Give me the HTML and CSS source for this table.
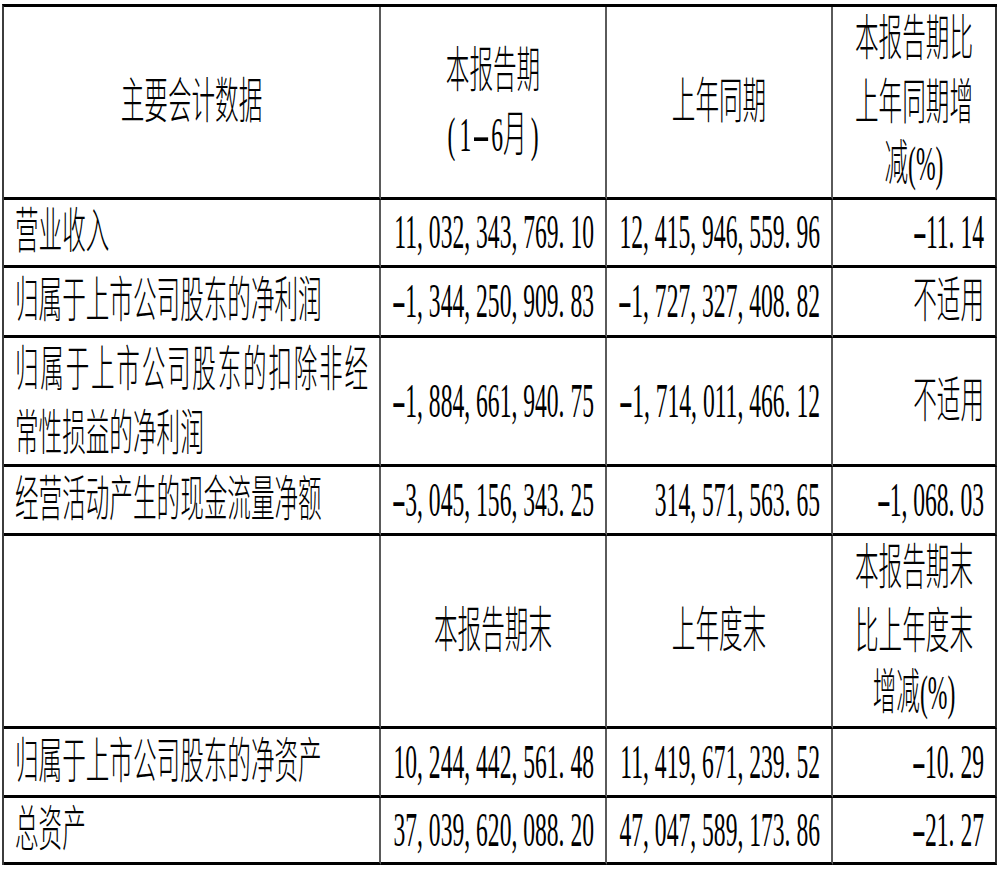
FILE: index.html
```html
<!DOCTYPE html>
<html lang="zh-CN">
<head>
<meta charset="utf-8">
<title>主要会计数据</title>
<link rel="stylesheet" href="styles.css">
</head>
<body>
<div class="sheet" role="table">
  <div class="row" role="row">
    <div class="cell center" role="columnheader"><span class="t">主要会计数据</span></div>
    <div class="cell center" role="columnheader"><span class="t">本报告期<br><span class="po">(</span>1<span class="dash">-</span>6月<span class="pc">)</span></span></div>
    <div class="cell center" role="columnheader"><span class="t">上年同期</span></div>
    <div class="cell center last" role="columnheader"><span class="t">本报告期比<br>上年同期增<br>减(%)</span></div>
  </div>
  <div class="row" role="row">
    <div class="cell left" role="cell"><span class="t">营业收入</span></div>
    <div class="cell right" role="cell"><span class="t">11<span class="p">,</span>032<span class="p">,</span>343<span class="p">,</span>769<span class="p">.</span>10</span></div>
    <div class="cell right" role="cell"><span class="t">12<span class="p">,</span>415<span class="p">,</span>946<span class="p">,</span>559<span class="p">.</span>96</span></div>
    <div class="cell right last" role="cell"><span class="t"><span class="m">-</span>11<span class="p">.</span>14</span></div>
  </div>
  <div class="row" role="row">
    <div class="cell left" role="cell"><span class="t">归属于上市公司股东的净利润</span></div>
    <div class="cell right" role="cell"><span class="t"><span class="m">-</span>1<span class="p">,</span>344<span class="p">,</span>250<span class="p">,</span>909<span class="p">.</span>83</span></div>
    <div class="cell right" role="cell"><span class="t"><span class="m">-</span>1<span class="p">,</span>727<span class="p">,</span>327<span class="p">,</span>408<span class="p">.</span>82</span></div>
    <div class="cell right last" role="cell"><span class="t">不适用</span></div>
  </div>
  <div class="row" role="row">
    <div class="cell left" role="cell"><span class="t wrap"><span class="just">归属于上市公司股东的扣除非经</span>常性损益的净利润</span></div>
    <div class="cell right" role="cell"><span class="t"><span class="m">-</span>1<span class="p">,</span>884<span class="p">,</span>661<span class="p">,</span>940<span class="p">.</span>75</span></div>
    <div class="cell right" role="cell"><span class="t"><span class="m">-</span>1<span class="p">,</span>714<span class="p">,</span>011<span class="p">,</span>466<span class="p">.</span>12</span></div>
    <div class="cell right last" role="cell"><span class="t">不适用</span></div>
  </div>
  <div class="row" role="row">
    <div class="cell left" role="cell"><span class="t">经营活动产生的现金流量净额</span></div>
    <div class="cell right" role="cell"><span class="t"><span class="m">-</span>3<span class="p">,</span>045<span class="p">,</span>156<span class="p">,</span>343<span class="p">.</span>25</span></div>
    <div class="cell right" role="cell"><span class="t">314<span class="p">,</span>571<span class="p">,</span>563<span class="p">.</span>65</span></div>
    <div class="cell right last" role="cell"><span class="t"><span class="m">-</span>1<span class="p">,</span>068<span class="p">.</span>03</span></div>
  </div>
  <div class="row" role="row">
    <div class="cell center" role="columnheader"></div>
    <div class="cell center" role="columnheader"><span class="t">本报告期末</span></div>
    <div class="cell center" role="columnheader"><span class="t">上年度末</span></div>
    <div class="cell center last" role="columnheader"><span class="t">本报告期末<br>比上年度末<br>增减(%)</span></div>
  </div>
  <div class="row" role="row">
    <div class="cell left" role="cell"><span class="t">归属于上市公司股东的净资产</span></div>
    <div class="cell right" role="cell"><span class="t">10<span class="p">,</span>244<span class="p">,</span>442<span class="p">,</span>561<span class="p">.</span>48</span></div>
    <div class="cell right" role="cell"><span class="t">11<span class="p">,</span>419<span class="p">,</span>671<span class="p">,</span>239<span class="p">.</span>52</span></div>
    <div class="cell right last" role="cell"><span class="t"><span class="m">-</span>10<span class="p">.</span>29</span></div>
  </div>
  <div class="row" role="row">
    <div class="cell left" role="cell"><span class="t">总资产</span></div>
    <div class="cell right" role="cell"><span class="t">37<span class="p">,</span>039<span class="p">,</span>620<span class="p">,</span>088<span class="p">.</span>20</span></div>
    <div class="cell right" role="cell"><span class="t">47<span class="p">,</span>047<span class="p">,</span>589<span class="p">,</span>173<span class="p">.</span>86</span></div>
    <div class="cell right last" role="cell"><span class="t"><span class="m">-</span>21<span class="p">.</span>27</span></div>
  </div>
</div>
</body>
</html>
```

FILE: styles.css
```css
html, body {
  margin: 0;
  padding: 0;
  background: #ffffff;
}

body {
  color: #000000;
  font-family: "Liberation Serif", "Noto Sans CJK SC", serif;
  font-weight: 300;
  text-spacing-trim: space-all;
}

.sheet {
  display: grid;
  grid-template-columns: 377px 226px 226px 164px;
  grid-template-rows: 193px 68px 70px 129px 69px 193px 69px 67px;
  width: max-content;
  margin: 4px 0 0 2px;
  border-top: 3px solid #000000;
  border-left: 2px solid #3c3c3c;
}

.row {
  display: contents;
}

.cell {
  box-sizing: border-box;
  display: flex;
  align-items: center;
  padding: 0 11px;
  border-right: 2px solid #5a5a5a;
  border-bottom: 3px solid #000000;
}

.cell.last {
  border-right-color: #333333;
}

.left {
  justify-content: flex-start;
  text-align: left;
}

.center {
  justify-content: center;
  text-align: center;
}

.right {
  justify-content: flex-end;
  text-align: right;
}

.t {
  display: inline-block;
  font-size: 23.6px;
  line-height: 30.5px;
  white-space: nowrap;
  transform: scaleY(2.05);
  transform-origin: 50% 50%;
}

.t.wrap {
  white-space: normal;
  width: 100%;
}

.just {
  display: block;
  text-align: justify;
  text-align-last: justify;
}

.p {
  display: inline-block;
  width: 0.5em;
  text-align: left;
}

.m {
  display: inline-block;
  width: 0.5em;
  text-align: center;
  transform: scaleX(1.8);
}

.po {
  display: inline-block;
  width: 12px;
  text-align: left;
}

.pc {
  display: inline-block;
  width: 12px;
  text-align: right;
}

.dash {
  display: inline-block;
  width: 20px;
  text-align: center;
  transform: scaleX(2.3);
}
```
